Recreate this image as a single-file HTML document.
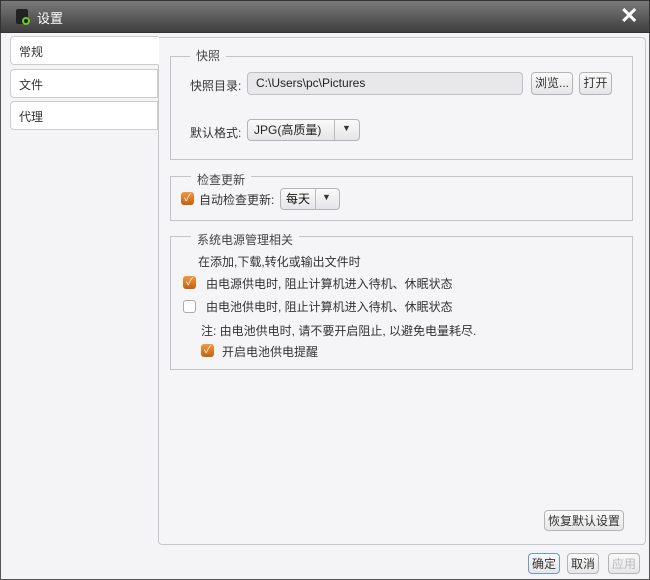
<!DOCTYPE html>
<html><head><meta charset="utf-8"><style>
*{box-sizing:border-box;margin:0;padding:0}
body{width:650px;height:580px;overflow:hidden;font-family:"Liberation Sans","Noto Sans CJK SC",sans-serif;font-size:12px;color:#333;background:#e9e9ec;position:relative}
.a{position:absolute}
.title{left:0;top:0;width:650px;height:33px;background:linear-gradient(#7a7a7a,#3e3e3e);border:1px solid #333}
.body{left:0;top:33px;width:650px;height:547px;background:#f4f4f6;border-left:1px solid #555;border-right:1px solid #555;border-bottom:1px solid #555}
.tab{left:10px;width:148px;height:29px;background:#fff;border:1px solid #ccc;border-right:none;border-radius:4px 0 0 4px;padding:6px 8px;font-size:12px}
.panel{left:158px;top:37px;width:488px;height:508px;background:#f5f5f8;border:1px solid #c8c8cc;border-radius:0 4px 4px 4px}
.grp{border:1px solid #c4c4c8}
.leg{background:#f5f5f8;padding:0 6px;color:#444}
.btn{background:linear-gradient(#fafafa,#e6e6e8);border:1px solid #b4b4b8;border-radius:4px;text-align:center;line-height:20px;color:#333}
.cb{width:13px;height:13px;border-radius:3px;background:linear-gradient(#f19a3e,#c46010);color:#fff;font-size:10px;line-height:13px;text-align:center}
.cbo{width:13px;height:13px;border-radius:3px;background:#fff;border:1px solid #aaa}
</style></head><body>
<div class="a title"></div>
<div class="a" style="left:16px;top:9px;width:12px;height:15px;background:#222;border-radius:2px"></div>
<div class="a" style="left:22px;top:17px;width:8px;height:8px;border-radius:50%;border:2px solid #6c2"></div>
<div class="a" style="left:37px;top:8px;color:#fff;font-size:13px">设置</div>
<div class="a" style="left:620px;top:3px;color:#fff;font-size:22px;font-weight:bold">✕</div>
<div class="a body"></div>
<div class="a panel"></div>
<div class="a tab" style="top:36px;border-right:1px solid #fff;width:149px;z-index:2">常规</div>
<div class="a tab" style="top:69px;border-right:1px solid #ccc">文件</div>
<div class="a tab" style="top:101px;border-right:1px solid #ccc">代理</div>

<div class="a grp" style="left:170px;top:56px;width:463px;height:104px"></div>
<div class="a leg" style="left:190px;top:47px">快照</div>
<div class="a" style="left:190px;top:77px">快照目录:</div>
<div class="a" style="left:247px;top:72px;width:276px;height:23px;background:#e8e8ea;border:1px solid #c0c0c4;border-radius:4px;padding:3px 8px;color:#222">C:\Users\pc\Pictures</div>
<div class="a btn" style="left:531px;top:72px;width:42px;height:23px">浏览...</div>
<div class="a btn" style="left:579px;top:72px;width:33px;height:23px">打开</div>
<div class="a" style="left:190px;top:124px">默认格式:</div>
<div class="a btn" style="left:247px;top:119px;width:113px;height:22px;text-align:left;padding-left:6px;color:#222">JPG(高质量)</div>
<div class="a" style="left:334px;top:120px;width:1px;height:20px;background:#bbb"></div>
<div class="a" style="left:342px;top:123px;font-size:9px;color:#333">▼</div>

<div class="a grp" style="left:170px;top:176px;width:463px;height:45px"></div>
<div class="a leg" style="left:191px;top:171px">检查更新</div>
<div class="a cb" style="left:181px;top:192px">✓</div>
<div class="a" style="left:199px;top:191px">自动检查更新:</div>
<div class="a btn" style="left:280px;top:188px;width:60px;height:22px;text-align:left;padding-left:5px;color:#111">每天</div>
<div class="a" style="left:315px;top:189px;width:1px;height:20px;background:#bbb"></div>
<div class="a" style="left:322px;top:192px;font-size:9px">▼</div>

<div class="a grp" style="left:170px;top:236px;width:463px;height:134px"></div>
<div class="a leg" style="left:191px;top:231px">系统电源管理相关</div>
<div class="a" style="left:198px;top:253px">在添加,下载,转化或输出文件时</div>
<div class="a cb" style="left:183px;top:276px">✓</div>
<div class="a" style="left:206px;top:275px">由电源供电时, 阻止计算机进入待机、休眠状态</div>
<div class="a cbo" style="left:183px;top:300px"></div>
<div class="a" style="left:206px;top:298px">由电池供电时, 阻止计算机进入待机、休眠状态</div>
<div class="a" style="left:201px;top:322px">注: 由电池供电时, 请不要开启阻止, 以避免电量耗尽.</div>
<div class="a cb" style="left:201px;top:344px">✓</div>
<div class="a" style="left:222px;top:343px">开启电池供电提醒</div>

<div class="a btn" style="left:544px;top:510px;width:80px;height:21px">恢复默认设置</div>
<div class="a btn" style="left:528px;top:553px;width:32px;height:21px;border-color:#6a9ad0">确定</div>
<div class="a btn" style="left:567px;top:553px;width:32px;height:21px">取消</div>
<div class="a btn" style="left:608px;top:553px;width:32px;height:21px;color:#bbb">应用</div>
</body></html>
